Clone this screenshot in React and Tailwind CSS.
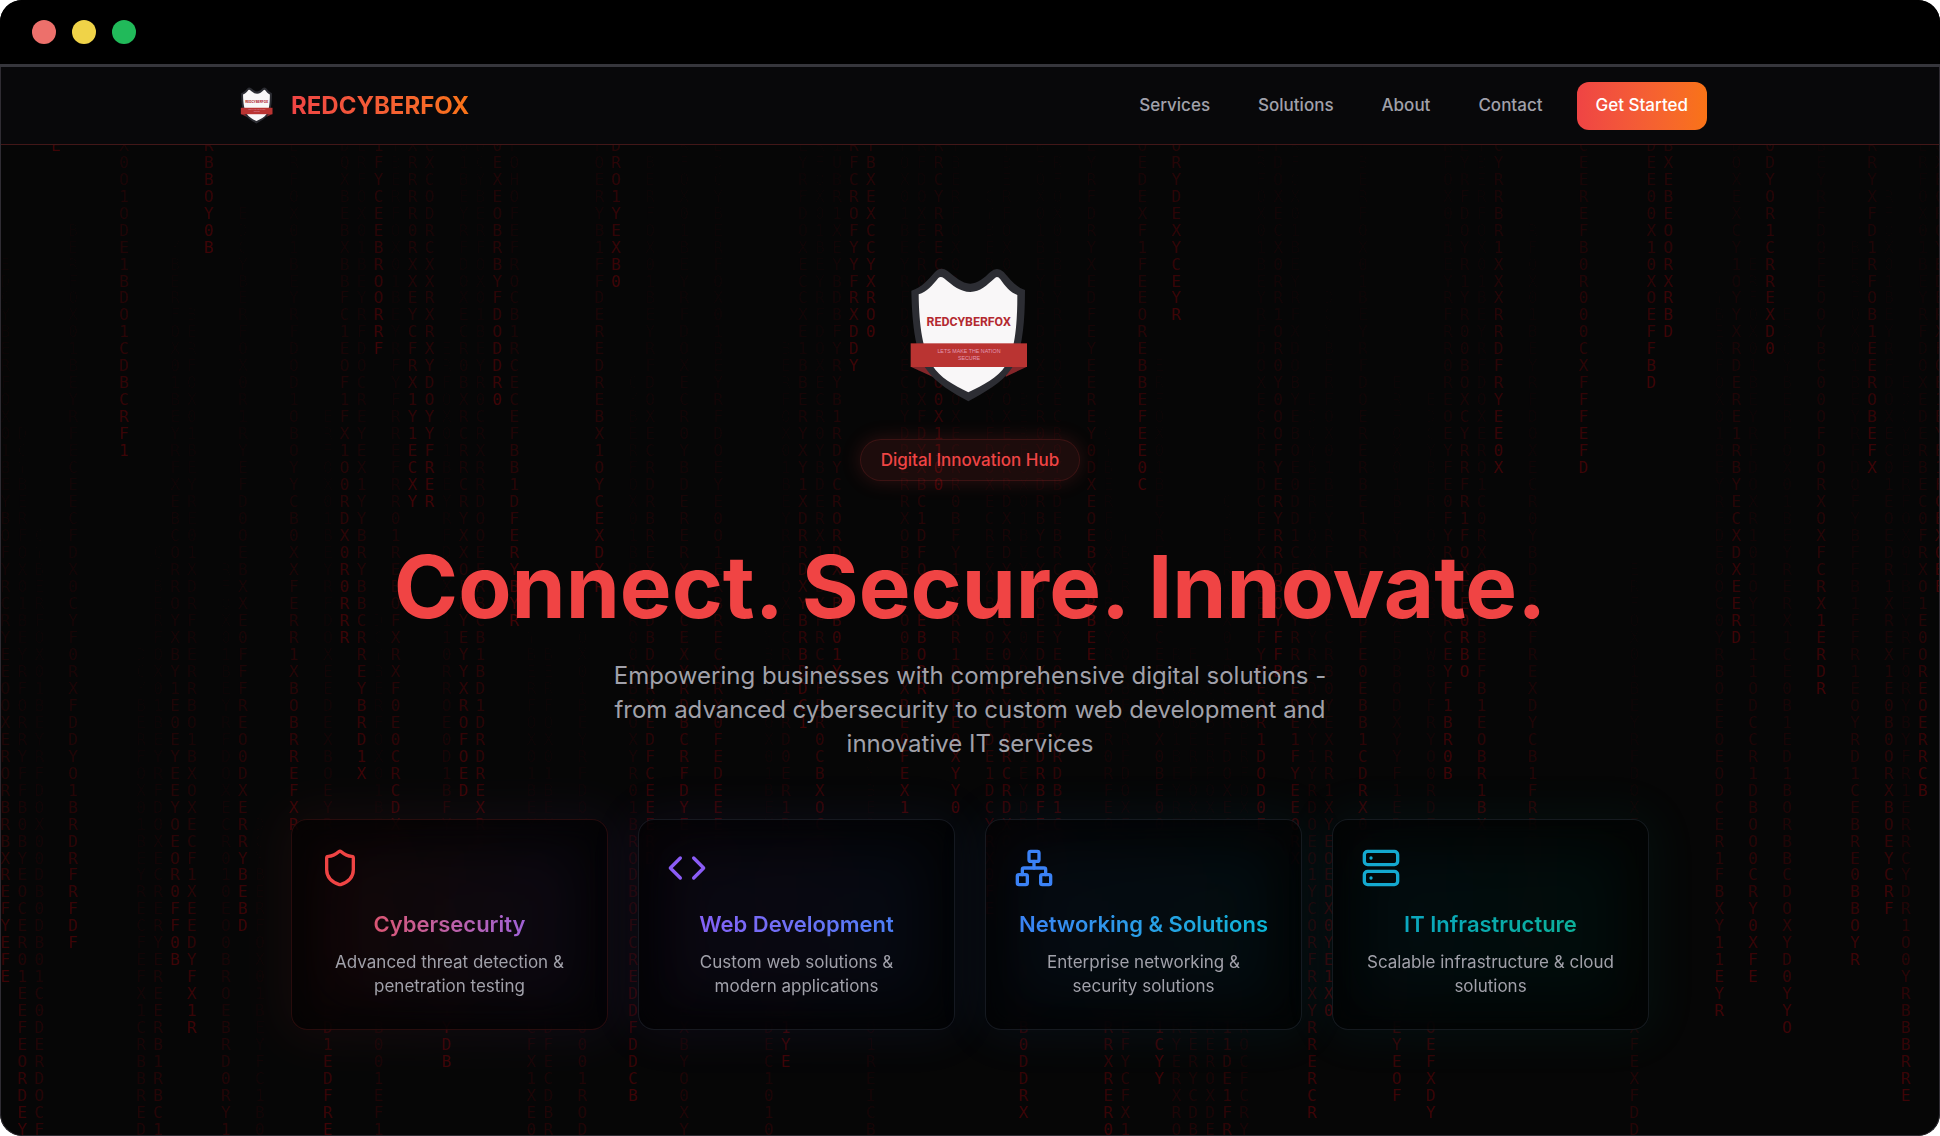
import { Code, Network, Server, Shield } from "lucide-react";

const NAV = [
  { href: "#services", label: "Services" },
  { href: "#solutions", label: "Solutions" },
  { href: "#about", label: "About" },
  { href: "#contact", label: "Contact" },
];

const SERVICES = [
  {
    title: "Cybersecurity",
    text: "Advanced threat detection & penetration testing",
    icon: Shield,
    iconColor: "text-[#ef4444]",
    border: "border-[#ef4444]/15",
    gradient: "from-[#ef4444] to-[#8b5cf6]",
  },
  {
    title: "Web Development",
    text: "Custom web solutions & modern applications",
    icon: Code,
    iconColor: "text-[#8b5cf6]",
    border: "border-slate-500/20",
    gradient: "from-[#8b5cf6] to-[#3b82f6]",
  },
  {
    title: "Networking & Solutions",
    text: "Enterprise networking & security solutions",
    icon: Network,
    iconColor: "text-[#3b82f6]",
    border: "border-slate-500/20",
    gradient: "from-[#3b82f6] to-[#06b6d4]",
  },
  {
    title: "IT Infrastructure",
    text: "Scalable infrastructure & cloud solutions",
    icon: Server,
    iconColor: "text-[#14a9d0]",
    border: "border-slate-500/20",
    gradient: "from-[#0ea5c9] to-[#10b08e]",
  },
];

// [column, row of the last glyph, glyphs top to bottom, frames since the head passed]
const STREAMS = [
  [0, 57, "BOFYRCRYEEOOXERORBRBXREFYEFE"],
  [1, 66, "ORRYFFB0BYEOCER01EEFEORDEY", 1],
  [2, 66, "00DB0DB01C0DERDOCF", 7],
  [3, 8, "E"],
  [4, 55, "RFECEECFDX0CYF0RXFDDYO1BRDRFRFDF"],
  [7, 26, "X0O1ODE1BDO1CDBCRF1"],
  [8, 66, "ECFEFX1CRBBRED", 14],
  [9, 66, "ERYEREERB1RBC1", 8],
  [10, 56, "XEBCORROYXBY1E0EYEEYOEOR0FF0B"],
  [11, 60, "E01XDRFRERRBO1BXOXECF1XEEDYFX1R"],
  [12, 14, "RBBOY0B"],
  [13, 66, "10EO0BROEBRD0RY1", 9],
  [14, 54, "R1RYEFD0OEBXXE0FFFREO0DXERRYBEBD"],
  [15, 66, "FC1B0", 24],
  [17, 48, "D1OBOYYCB0XXFERR1XBOBRREFXR"],
  [19, 66, "EDEXBOEYRDF0RXEBCYOED1EDFRE"],
  [20, 37, "DQXBEBXBBFC1EOF1FX1O0RDX0R0RRR"],
  [21, 45, "CREYEX1YYBRYBBCRREYBRD1X"],
  [22, 20, "1FYCEEBROORRF"],
  [22, 66, "001EF1", 12],
  [23, 49, "YFRREFRR01REBOFXRXF0E0CRCDXR"],
  [24, 29, "XRRRR0RXXEYCFRX1Y1ECXY"],
  [25, 29, "CXCODRCXXRXRXYDOYYFRER"],
  [26, 62, "F110RROE0D1BFYEX0DCRBE0R1YDB"],
  [27, 46, "BXRCRRCRYXXOFRYEYYXROFOED"],
  [28, 49, "R0CRXRRDOOEFRBCB1BD1DRDREXRE"],
  [29, 23, "0EXEOBRBYFDODDR0"],
  [30, 36, "FOHOFEFROCB1RCECEFBB1DFERYBYR"],
  [31, 66, "CFX1XE0", 13],
  [32, 66, "FECDBR", 14],
  [34, 66, "0001ROD", 11],
  [35, 34, "OERYB1FFDEREDREBX1OYCEXDXR"],
  [36, 16, "DRO1YEXB0"],
  [37, 64, "RRYR001BROXYR01BRODBOFCREDDFDDCB"],
  [38, 50, "DRBREYXCDBDYRXEDFCEEERD"],
  [40, 49, "ERYOBCEXYRDBCRFDYEX"],
  [40, 66, "BYO0XY", 12],
  [42, 50, "EYE0O1EXBRECYRX0FEDEEEFB"],
  [45, 66, "EC1010", 13],
  [46, 62, "E1ERD0ER1REDC0XYBFOXC1YE"],
  [47, 42, "CXE1BBERYXY1XDRRDXYBRBDDC1"],
  [48, 50, "X1DBYFRCOFER0CBXOCED"],
  [49, 39, "UBR1XEYBDBFYRYB1RDYCRORDXRBB01Y"],
  [50, 21, "RFCROFYYFRXDDY"],
  [51, 19, "YBXEXCCYXRO0"],
  [51, 66, "1REICB", 20],
  [53, 47, "YDRERRXOBEDCO0BEXRE0FEX1"],
  [54, 40, "OXFDYXBC1DFOREEBOBR"],
  [55, 28, "RCYRRECDEFXB1O0X1100"],
  [56, 47, "R0BFY1XYRR1DDFE0XYY0"],
  [58, 53, "REXCBEOEYR0CDE1DCYRX0FE"],
  [59, 50, "RDXRDYEBCX0REYF0RCRDXOC"],
  [60, 65, "E0XRC1101EYDRBFOXE0CRBYOB0DDRX"],
  [61, 49, "RBYCXDOEEDYREBFDRBFER"],
  [62, 51, "BRCOB1YE0EOFYRDB1CXYR"],
  [64, 38, "RYXEDFEYEEREY0DXEOEBXYRBEE"],
  [65, 66, "BYER0RFE0XCDBYREOCFXRRXRER0", 1],
  [66, 66, "EFYCFX1", 7],
  [67, 28, "OEDEXF1FEEOREBBEFEE0C"],
  [68, 63, "EEREYX0BE00DCRFXYEOB0D1CYY"],
  [69, 18, "ORYDEXYCEYR"],
  [69, 66, "YERXRO", 14],
  [70, 66, "EERYCDB", 14],
  [71, 66, "EROXDE", 15],
  [72, 66, "11DE1FR", 5],
  [73, 66, "OCFCRY", 17],
  [74, 49, "FRDCEFXDBEEFYREOR1DOD0EF"],
  [75, 39, "X0RR1OR0Y0OOFYERYRRDBOYFFB"],
  [76, 50, "XDOBYEBOE0DD1CEOFYRRCEDE1FYEE0RX"],
  [77, 65, "Y1YRDOEO1YCORFRXYRRERCR"],
  [78, 59, "B0YEXRR1XYEOEDX0YE1X0"],
  [80, 50, "ERERBE1RRE0DDFE0EBB1CDRX0YR"],
  [82, 64, "DBODXYYF1EDCRXEYFBD0RXEYEOF"],
  [84, 65, "WBYFRYO0RDEXYFCDB0ERXYOEFXDY"],
  [85, 45, "RR0REOEYFE0FYRBOXRCEYF1BR0B"],
  [86, 39, "YR1YR00BOXCYRRFR1FOXFE0RBO"],
  [87, 50, "ERO1C0RX0FOEBEFB1EOBR1BXCE"],
  [88, 27, "CYRRBR1XXXRRDFRYEE0X"],
  [90, 55, "REXDYCB1FRBBOYXERD"],
  [93, 27, "CEEREFB0R000CXFFFEFD"],
  [96, 66, "XFEXFDD", 9],
  [97, 22, "DEE00X10XOEFFBD"],
  [98, 19, "BXEBEOORXRBD"],
  [101, 59, "EOOC0YRBOEEOEODCER1FBXY11EYR"],
  [102, 37, "XCY1OYYXRDERE1RBYECXDXEERD"],
  [103, 57, "R101OY1111ODCCR1DBOO0CRY0XFE"],
  [104, 20, "0DYOR1CRREXD0"],
  [105, 60, "ERX1CE0B1ED1BORBBCDOXYD0YYO"],
  [107, 40, "FEOOYBC00OFDORXOXFCRX1ERDR"],
  [109, 56, "FYBFFB1FFR1EOYRD1CEBRE0BBOYR"],
  [110, 27, "RRYXFD1RFOB1EEROBEFX"],
  [111, 53, "01EOEDR1XREX1E0B0ORXBOEYCRF"],
  [112, 64, "0RYBYFR1ERRCYDR1O0YRBBBRRE"],
  [113, 46, "DERBEC0FRXO1E0OREOERRCB"],
  [114, 34, "EYE1FCEX0BE"],
];

const PITCH = 16.97;
const TRAIL = 44;
const OLD = "REDCYBERFOX01BEYRFDOXECR0YBDERXFOE1CYRBEDOX0FER1";

function MatrixRain() {
  return (
    <svg
      aria-hidden="true"
      className="absolute inset-0 h-full w-full select-none fill-[#d00008] font-['DejaVu_Sans_Mono',monospace] text-[16px]"
    >
      {STREAMS.map(([col, end, tail, age = 0]) => {
        // older glyphs above the listed ones fill up the rest of the trail
        const start = col % 7;
        const missing = Math.max(0, TRAIL - age - tail.length);
        const glyphs = (OLD.slice(start) + OLD).slice(0, missing) + tail;
        return (
          <text key={`${col}-${end}`}>
            {[...glyphs].map((glyph, i) => {
              const back = glyphs.length - 1 - i;
              const row = end - back;
              if (row < 8) return null;
              return (
                <tspan
                  key={row}
                  x={col * PITCH - 0.8}
                  y={row * PITCH - 52}
                  fillOpacity={0.28 * Math.pow(0.945, back + age)}
                >
                  {glyph}
                </tspan>
              );
            })}
          </text>
        );
      })}
    </svg>
  );
}

function Crest({ className }) {
  return (
    <svg viewBox="245 81 408 408" className={className} role="img" aria-label="RedCyberFox">
      <path d="M271 380 L340 412 L340 370Z M620 380 L556 410 L556 370Z" fill="#84262a" />
      <path
        d="M273 152 C305 142 322 120 342 98 Q360 78 382 93 C405 111 424 130 450 131 C474 130 492 113 510 96 Q530 78 550 96 C570 119 588 142 614 150 C614 270 602 345 572 388 C546 428 492 458 444 484 C398 460 344 428 318 388 C288 345 275 260 273 152Z"
        fill="#2c2d33"
      />
      <path
        d="M295 163 C320 155 336 136 354 114 Q361 107 371 115 C398 138 420 156 450 156 C480 155 498 137 524 114 Q532 107 540 118 C554 138 570 158 591 165 C591 270 582 335 555 378 C532 414 490 434 444 457 C400 435 358 412 337 378 C308 335 296 260 295 163Z"
        fill="#f9f7f8"
      />
      <rect x="271" y="310" width="349" height="71" fill="#ba3432" />
      <text
        x="445"
        y="258"
        textAnchor="middle"
        fill="#b3282f"
        className="font-[Roboto,sans-serif] text-[37px] font-bold"
      >
        REDCYBERFOX
      </text>
      <g
        fill="#e39bb4"
        textAnchor="middle"
        className="font-['Liberation_Sans',sans-serif] text-[16px]"
      >
        <text x="446" y="338">LETS MAKE THE NATION</text>
        <text x="446" y="361">SECURE</text>
      </g>
    </svg>
  );
}

function TitleBar() {
  return (
    <div className="flex h-[67px] items-center gap-4 border-b-[3px] border-[#36363c] bg-black px-8">
      <span className="size-6 rounded-full bg-[#ed706b]" />
      <span className="size-6 rounded-full bg-[#f0d348]" />
      <span className="size-6 rounded-full bg-[#21ba5a]" />
    </div>
  );
}

function Header() {
  return (
    <header className="relative border-b border-[#ef4444]/25 bg-[#08080a]">
      <div className="mx-auto flex h-[77px] max-w-[1474px] items-center justify-between">
        <a href="#top" className="flex items-center gap-[10px]">
          <Crest className="h-[37px] w-12" />
          <span className="bg-linear-to-r from-[#ef4444] to-[#f97316] bg-clip-text text-[24px] font-bold text-transparent">
            REDCYBERFOX
          </span>
        </a>
        <nav className="flex items-center gap-12 text-[17px] font-medium text-[#a1a1aa]">
          {NAV.map((item) => (
            <a key={item.href} href={item.href}>
              {item.label}
            </a>
          ))}
          <button
            type="button"
            className="-ml-[14px] h-12 rounded-xl bg-linear-to-r from-[#ef4444] to-[#f97316] px-[19px] text-white"
          >
            Get Started
          </button>
        </nav>
      </div>
    </header>
  );
}

function ServiceCard({ service }) {
  const Icon = service.icon;
  return (
    <article className="relative">
      <div
        className={`absolute -inset-2 rounded-3xl bg-linear-to-r opacity-6 blur-xl ${service.gradient}`}
      />
      <div
        className={`relative h-full overflow-hidden rounded-2xl border bg-black/60 px-7 pt-7 pb-[31px] backdrop-blur-md ${service.border}`}
      >
        <div
          className={`absolute inset-8 bg-linear-to-r opacity-4 blur-xl ${service.gradient}`}
        />
        <div className="relative text-center">
          <Icon className={`mb-[22px] size-10 ${service.iconColor}`} strokeWidth={2} />
          <h3
            className={`bg-linear-to-r bg-clip-text text-[22px] leading-7 font-semibold text-transparent ${service.gradient}`}
          >
            {service.title}
          </h3>
          <p className="mt-3 text-[17px] leading-6 text-[#a1a1aa]">{service.text}</p>
        </div>
      </div>
    </article>
  );
}

export default function App() {
  return (
    <div className="min-h-screen bg-white font-[Inter,sans-serif]">
      <div className="flex min-h-screen flex-col overflow-hidden rounded-[22px] bg-[#060606]">
        <TitleBar />
        <div
          id="top"
          className="relative flex-1 overflow-hidden rounded-b-[22px] border-x border-b border-[#2f2c33]"
        >
          <MatrixRain />
          <Header />
          <main className="relative flex flex-col items-center px-6 pt-[122px] pb-24 text-center">
            <Crest className="size-[136px]" />
            <p className="mt-9 rounded-full border border-[#ef4444]/15 bg-[#ef4444]/10 px-5 py-2 text-[17px] leading-6 font-medium text-[#ef4444] shadow-[0_0_20px_rgba(239,68,68,0.18)]">
              Digital Innovation Hub
            </p>
            <h1 className="mt-[62px] text-[87px] leading-[88px] font-bold text-[#f04444]">
              Connect. Secure. Innovate.
            </h1>
            <p className="mt-7 max-w-[740px] text-[24px] leading-[34px] text-[#a1a1aa]">
              Empowering businesses with comprehensive digital solutions - from advanced
              cybersecurity to custom web development and innovative IT services
            </p>
            <section
              id="services"
              className="mt-[58px] grid w-full max-w-[1358px] grid-cols-4 gap-[30px]"
            >
              {SERVICES.map((service) => (
                <ServiceCard key={service.title} service={service} />
              ))}
            </section>
          </main>
        </div>
      </div>
    </div>
  );
}
